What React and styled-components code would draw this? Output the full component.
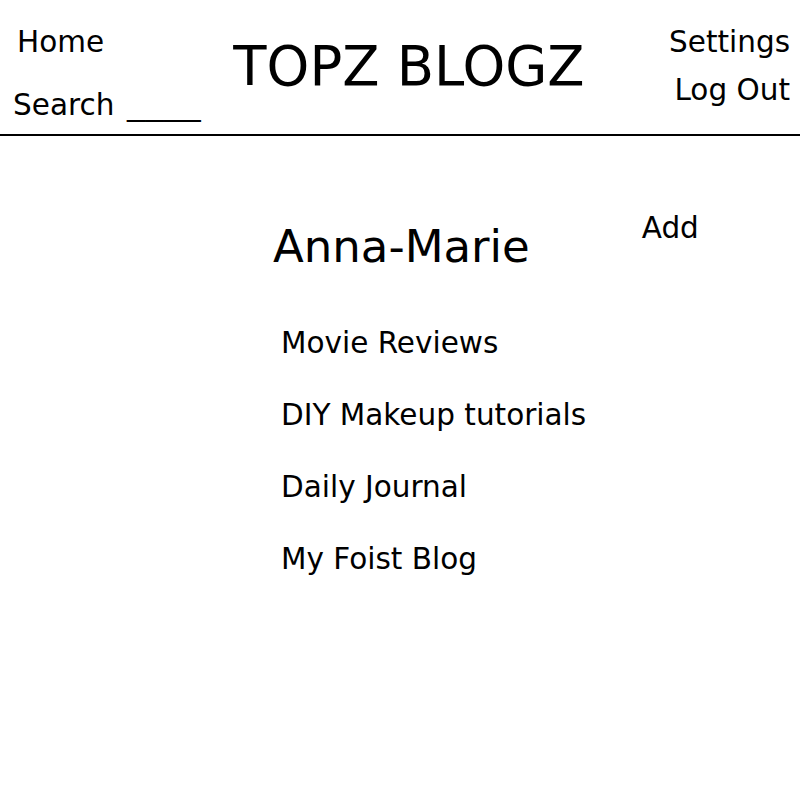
import React from "react";
import styled, { createGlobalStyle } from "styled-components";

const GlobalStyle = createGlobalStyle`
  body {
    margin: 0;
    background: #ffffff;
    font-family: "DejaVu Sans", Verdana, sans-serif;
    color: #000000;
  }
`;

const blogs = ["Movie Reviews", "DIY Makeup tutorials", "Daily Journal", "My Foist Blog"];

function App() {
  return (
    <Page>
      <GlobalStyle />
      <Header>
        <LeftNav>
          <NavLink $indent={4}>Home</NavLink>
          <NavLink $gap={29}>
            Search<SearchBlank>____</SearchBlank>
          </NavLink>
        </LeftNav>
        <Title>TOPZ BLOGZ</Title>
        <RightNav>
          <NavLink>Settings</NavLink>
          <NavLink $gap={14}>Log Out</NavLink>
        </RightNav>
      </Header>

      <Main>
        <ProfileRow>
          <UserName>Anna-Marie</UserName>
          <AddButton>Add</AddButton>
        </ProfileRow>
        <BlogList>
          {blogs.map((b) => (
            <BlogItem key={b}>{b}</BlogItem>
          ))}
        </BlogList>
      </Main>
    </Page>
  );
}

const Page = styled.div`
  width: 800px;
  min-height: 800px;
  background: #ffffff;
`;

const Header = styled.header`
  display: grid;
  grid-template-columns: 1fr auto 1fr;
  align-items: start;
  height: 136px;
  box-sizing: border-box;
  padding-top: 25px;
  border-bottom: 2px solid #000000;
`;

const LeftNav = styled.nav`
  display: flex;
  flex-direction: column;
  align-items: flex-start;
  padding-left: 13px;
`;

const RightNav = styled.nav`
  display: flex;
  flex-direction: column;
  align-items: flex-end;
  padding-right: 10px;
`;

const NavLink = styled.a`
  font-size: 29.5px;
  line-height: 34px;
  white-space: pre;
  margin-left: ${(p) => p.$indent || 0}px;
  margin-top: ${(p) => p.$gap || 0}px;
  cursor: pointer;
`;

const SearchBlank = styled.span`
  display: inline-block;
  margin-left: 13px;
  transform: scaleX(1.25);
  transform-origin: left center;
`;

const Title = styled.h1`
  margin: 12px 0 0;
  padding-left: 18px;
  font-size: 54.4px;
  font-weight: normal;
  line-height: 60px;
  white-space: nowrap;
`;

const Main = styled.main`
  padding-left: 273px;
`;

const ProfileRow = styled.div`
  display: flex;
  align-items: flex-start;
  gap: 112px;
  padding-top: 75px;
`;

const UserName = styled.h2`
  margin: 9px 0 0;
  font-size: 45px;
  font-weight: normal;
  line-height: normal;
`;

const AddButton = styled.a`
  font-size: 29.5px;
  line-height: normal;
  cursor: pointer;
`;

const BlogList = styled.ul`
  list-style: none;
  margin: 34px 0 0;
  padding: 0 0 0 8px;
`;

const BlogItem = styled.li`
  font-size: 29.5px;
  line-height: 72px;
`;

export default App;
